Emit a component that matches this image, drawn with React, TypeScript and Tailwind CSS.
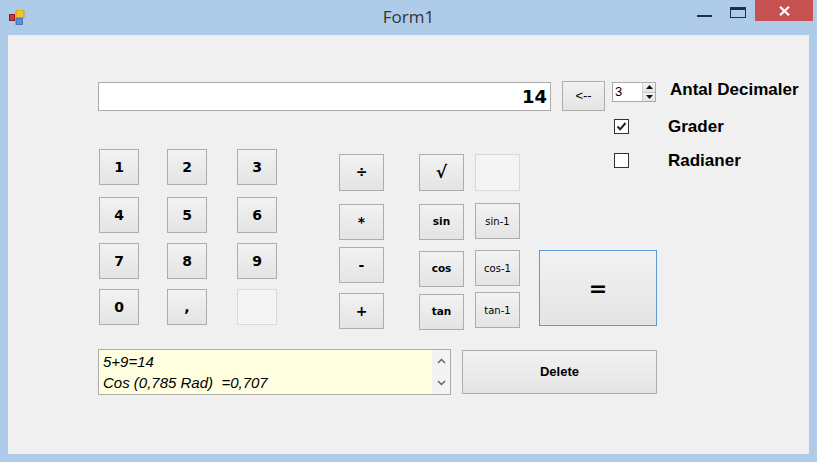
import React from "react";

const lib = "font-['Liberation_Sans',Arial,sans-serif]";
const dv = "font-['DejaVu_Sans',Verdana,sans-serif]";

function Btn({
  className = "",
  children,
  disabled = false,
}: {
  className?: string;
  children?: React.ReactNode;
  disabled?: boolean;
}) {
  return (
    <button
      type="button"
      className={`flex items-center justify-center border text-black ${
        disabled
          ? "border-[#d9d9d9] bg-[#f4f4f4]"
          : "border-[#adadad] bg-linear-to-b from-[#f2f2f2] to-[#e4e4e4]"
      } ${className}`}
    >
      {children}
    </button>
  );
}

const numRows = [
  ["1", "2", "3"],
  ["4", "5", "6"],
  ["7", "8", "9"],
  ["0", ",", ""],
];
const rowMt = ["", "mt-[12px]", "mt-[10px]", "mt-[10px]"];
const colMl = ["", "ml-[28px]", "ml-[30px]"];

const ops = [
  { t: "÷", c: "h-[37px]" },
  { t: "*", c: "mt-[13px] h-[36px]" },
  { t: "-", c: "mt-[7px] h-[36px]" },
  { t: "+", c: "mt-[10px] h-[36px]" },
];

const funcs1 = [
  { t: "√", c: "h-[37px]", f: "text-[17px]" },
  { t: "sin", c: "mt-[13px] h-[36px]", f: "text-[10.5px]" },
  { t: "cos", c: "mt-[11px] h-[36px]", f: "text-[10.5px]" },
  { t: "tan", c: "mt-[7px] h-[36px]", f: "text-[10.5px]" },
];

const funcs2 = [
  { t: "sin-1", c: "mt-[12px] h-[36px]" },
  { t: "cos-1", c: "mt-[11px] h-[36px]" },
  { t: "tan-1", c: "mt-[6px] h-[36px]" },
];

function Check({ checked }: { checked: boolean }) {
  return (
    <div className="w-[15px] h-[15px] border border-[#333] bg-white flex items-center justify-center">
      {checked && (
        <svg width="11" height="11" viewBox="0 0 11 11">
          <path d="M1.5 5.5 L4.2 8.3 L9.5 2" fill="none" stroke="#222" strokeWidth="2" />
        </svg>
      )}
    </div>
  );
}

export default function App() {
  return (
    <div className="w-[817px] h-[462px] bg-[#afcbea] flex flex-col overflow-hidden">
      {/* Title bar */}
      <div className="h-[35px] grid grid-cols-[1fr_auto_1fr]">
        <div className="pl-[9px] pt-[10px]">
          <svg width="16" height="15" viewBox="0 0 16 15">
            <rect x="0.5" y="4.5" width="5" height="6" fill="#d23a3a" stroke="#8a1d1d" />
            <rect x="7" y="0" width="8" height="7.5" fill="#f4c430" stroke="#c99700" strokeWidth="0.8" />
            <rect x="7" y="8.5" width="6.5" height="6" fill="#5b8fd6" stroke="#3a6ab0" strokeWidth="0.8" />
          </svg>
        </div>
        <div className={`pt-[6px] text-[17px] leading-[22px] text-[#333] font-['Open_Sans',sans-serif]`}>
          Form1
        </div>
        <div className="flex justify-end items-start pr-[4px]">
          <div className="w-[27px] h-[21px] flex items-end justify-center pb-[4px]">
            <div className="w-[15px] h-[2px] bg-[#1f2f44]" />
          </div>
          <div className="ml-[6px] w-[27px] h-[21px] flex items-start justify-center pt-[7px]">
            <div className="w-[16px] h-[11px] border border-[#1f2f44] border-t-[3px]" />
          </div>
          <div className="ml-[4px] w-[58px] h-[21px] bg-[#c75050] flex items-center justify-center">
            <svg width="11" height="10" viewBox="0 0 11 10">
              <path d="M1 0.8 L10 9.2 M10 0.8 L1 9.2" stroke="white" strokeWidth="2.2" />
            </svg>
          </div>
        </div>
      </div>

      {/* Client area */}
      <div className={`flex-1 mx-[8px] mb-[8px] bg-[#f0f0f0] pl-[90px] ${lib}`}>
        {/* Row A */}
        <div className="mt-[46px] flex items-start">
          <div className="mt-[1px] w-[453px] h-[29px] border border-[#ababab] bg-white flex items-center justify-end pr-[3px]">
            <span className={`${dv} font-bold text-[18px] leading-none text-black`}>14</span>
          </div>
          <Btn className="ml-[11px] w-[43px] h-[30px] text-[13px]">&lt;--</Btn>
          <div className="ml-[7px] mt-[1px] w-[44px] h-[20px] border border-[#ababab] bg-white flex">
            <div className="flex-1 pl-[2px] text-[13px] leading-[18px] text-black">3</div>
            <div className="w-[13px] flex flex-col border-l border-[#d0d0d0]">
              <div className="flex-1 flex items-center justify-center bg-linear-to-b from-[#f4f4f4] to-[#e4e4e4] border-b border-[#c4c4c4]">
                <svg width="7" height="4" viewBox="0 0 7 4">
                  <path d="M0 4 L3.5 0 L7 4 Z" fill="#111" />
                </svg>
              </div>
              <div className="flex-1 flex items-center justify-center bg-linear-to-b from-[#f4f4f4] to-[#e4e4e4]">
                <svg width="7" height="4" viewBox="0 0 7 4">
                  <path d="M0 0 L7 0 L3.5 4 Z" fill="#111" />
                </svg>
              </div>
            </div>
          </div>
          <div className="ml-[14px] text-[17px] leading-[18px] font-bold text-black whitespace-nowrap">
            Antal Decimaler
          </div>
        </div>

        {/* Row B */}
        <div className="mt-[7px] flex items-start h-[212px]">
          {/* numbers */}
          <div className={`ml-[1px] mt-[31px] flex flex-col ${dv}`}>
            {numRows.map((row, r) => (
              <div key={r} className={`flex ${rowMt[r]}`}>
                {row.map((t, c) => (
                  <Btn
                    key={c}
                    disabled={t === ""}
                    className={`${colMl[c]} w-[40px] h-[36px] text-[14px] font-bold`}
                  >
                    {t}
                  </Btn>
                ))}
              </div>
            ))}
          </div>

          {/* operators */}
          <div className={`ml-[62px] mt-[36px] flex flex-col ${dv}`}>
            {ops.map((o) => (
              <Btn key={o.t} className={`w-[45px] ${o.c} text-[14px] font-bold`}>
                {o.t}
              </Btn>
            ))}
          </div>

          {/* funcs 1 */}
          <div className={`ml-[35px] mt-[36px] flex flex-col ${dv}`}>
            {funcs1.map((o) => (
              <Btn key={o.t} className={`w-[45px] ${o.c} ${o.f} font-bold`}>
                {o.t}
              </Btn>
            ))}
          </div>

          {/* funcs 2 */}
          <div className={`ml-[11px] mt-[36px] flex flex-col ${dv}`}>
            <Btn disabled className="w-[45px] h-[37px]" />
            {funcs2.map((o) => (
              <Btn key={o.t} className={`w-[45px] ${o.c} text-[10px]`}>
                {o.t}
              </Btn>
            ))}
          </div>

          {/* right column */}
          <div className="ml-[19px] flex flex-col">
            <div className="ml-[75px] flex items-center h-[16px]">
              <Check checked />
              <span className="ml-[39px] text-[17px] font-bold text-black leading-none">Grader</span>
            </div>
            <div className="ml-[75px] mt-[18px] flex items-center h-[16px]">
              <Check checked={false} />
              <span className="ml-[39px] text-[17px] font-bold text-black leading-none">Radianer</span>
            </div>
            <button
              type="button"
              className={`mt-[82px] w-[118px] h-[76px] border border-[#5b9bd8] bg-linear-to-b from-[#f2f2f2] to-[#e4e4e4] flex items-center justify-center ${dv} text-[22px] font-bold text-black`}
            >
              =
            </button>
          </div>
        </div>

        {/* Row C */}
        <div className="mt-[19px] flex items-start">
          <div className="w-[353px] h-[46px] border border-[#ababab] bg-[#ffffe0] flex">
            <div className="flex-1 pl-[4px] pt-[1px] italic text-[15px] leading-[21px] text-black whitespace-pre">
              {"5+9=14\nCos (0,785 Rad)  =0,707"}
            </div>
            <div className="w-[18px] bg-[#f3f3f3] flex flex-col items-center justify-between py-[8px]">
              <svg width="9" height="6" viewBox="0 0 9 6">
                <path d="M1 5 L4.5 1.5 L8 5" fill="none" stroke="#606060" strokeWidth="1.4" />
              </svg>
              <svg width="9" height="6" viewBox="0 0 9 6">
                <path d="M1 1 L4.5 4.5 L8 1" fill="none" stroke="#606060" strokeWidth="1.4" />
              </svg>
            </div>
          </div>
          <Btn className="ml-[11px] mt-[1px] w-[195px] h-[44px] text-[13px] font-bold">Delete</Btn>
        </div>
      </div>
    </div>
  );
}
